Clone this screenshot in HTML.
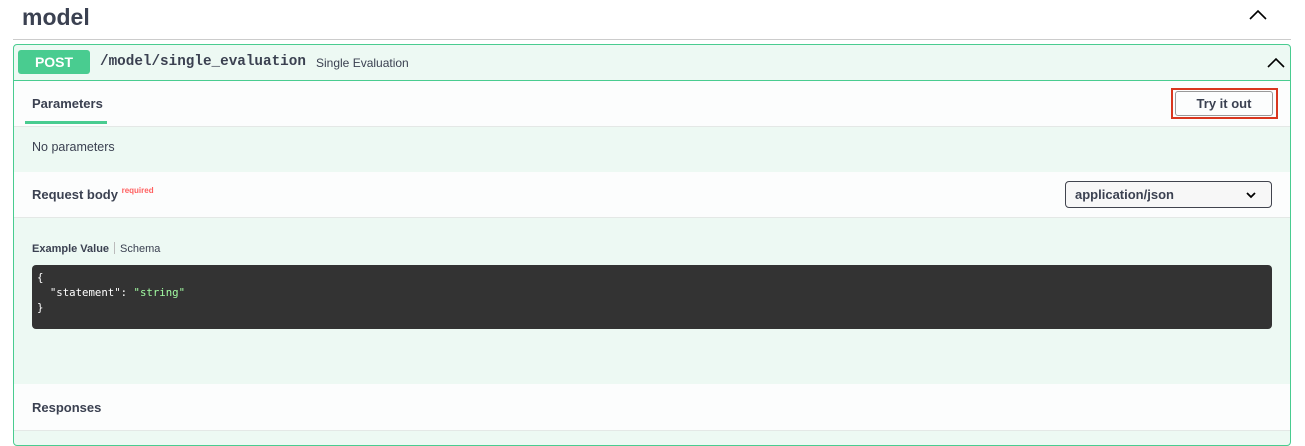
<!DOCTYPE html>
<html><head><style>
body{margin:0;width:1305px;height:432px;overflow:hidden;background:#fff;font-family:"Liberation Sans",sans-serif;color:#3b4151;position:relative}
.a{position:absolute}
.h{font-weight:bold;font-size:14px}
</style></head><body>
<div class="a" style="left:22px;top:4px;font-size:23px;font-weight:bold">model</div>
<svg class="a" style="left:1249px;top:9px" width="18" height="12"><path d="M1 10 L9 2 L17 10" fill="none" stroke="#000" stroke-width="1.6"/></svg>
<div class="a" style="left:13px;top:39px;width:1278px;height:1px;background:#ccc"></div>
<div class="a" style="left:13px;top:44px;width:1276px;height:400px;border:1px solid #49cc90;border-radius:4px;background:#edf9f3"></div>
<div class="a" style="left:14px;top:80px;width:1276px;height:1px;background:#49cc90"></div>
<div class="a" style="left:18px;top:50px;width:72px;height:24px;background:#49cc90;border-radius:3px;color:#fff;font-weight:bold;font-size:14px;text-align:center;line-height:24px">POST</div>
<div class="a" style="left:100px;top:54px;font-family:'Liberation Mono',monospace;font-weight:bold;font-size:14.3px">/model/single_evaluation</div>
<div class="a" style="left:316px;top:56px;font-size:12px">Single Evaluation</div>
<svg class="a" style="left:1267px;top:57px" width="18" height="12"><path d="M1 10 L9 2 L17 10" fill="none" stroke="#000" stroke-width="1.6"/></svg>
<div class="a" style="left:14px;top:81px;width:1276px;height:45px;background:#fcfdfd;border-bottom:1px solid #e4e8e6"></div>
<div class="a h" style="left:32px;top:96px;font-size:13px">Parameters</div>
<div class="a" style="left:25px;top:121px;width:82px;height:3px;background:#49cc90"></div>
<div class="a" style="left:1171px;top:88px;width:103px;height:27px;border:2px solid #d9361e"></div>
<div class="a" style="left:1175px;top:91px;width:96px;height:23px;border:1px solid #999;border-radius:3px;background:#fcfdfd;font-weight:bold;font-size:13px;text-align:center;line-height:23px">Try it out</div>
<div class="a" style="left:32px;top:140px;font-size:12.5px">No parameters</div>
<div class="a" style="left:14px;top:172px;width:1276px;height:45px;background:#fcfdfd;border-bottom:1px solid #e4e8e6"></div>
<div class="a h" style="left:32px;top:187px;font-size:13px;line-height:15px">Request body <span style="color:#ff6060;font-size:8px;position:relative;top:-6px">required</span></div>
<div class="a" style="left:1065px;top:181px;width:205px;height:25px;border:1px solid #41444e;border-radius:4px;background:#f7f7f7;font-weight:bold;font-size:13px;line-height:25px"><span style="margin-left:9px">application/json</span>
<svg class="a" style="left:180px;top:10px" width="10" height="7"><path d="M1 1 L5 5 L9 1" fill="none" stroke="#000" stroke-width="1.8"/></svg></div>
<div class="a" style="left:32px;top:242px;font-size:11px"><b>Example Value</b><span style="display:inline-block;width:1px;height:12px;background:#bbb;margin:0 5px;vertical-align:-2px"></span>Schema</div>
<div class="a" style="left:32px;top:265px;width:1240px;height:64px;background:#333;border-radius:4px;color:#fff;font-family:'DejaVu Sans Mono',monospace;font-size:10.7px;line-height:15px;padding:5px 5px;box-sizing:border-box;white-space:pre">{
  "statement": <span style="color:#a2fca2">"string"</span>
}</div>
<div class="a" style="left:14px;top:384px;width:1276px;height:46px;background:#fcfdfd;border-bottom:1px solid #e4e8e6"></div>
<div class="a h" style="left:32px;top:400px;font-size:13px">Responses</div>
</body></html>
